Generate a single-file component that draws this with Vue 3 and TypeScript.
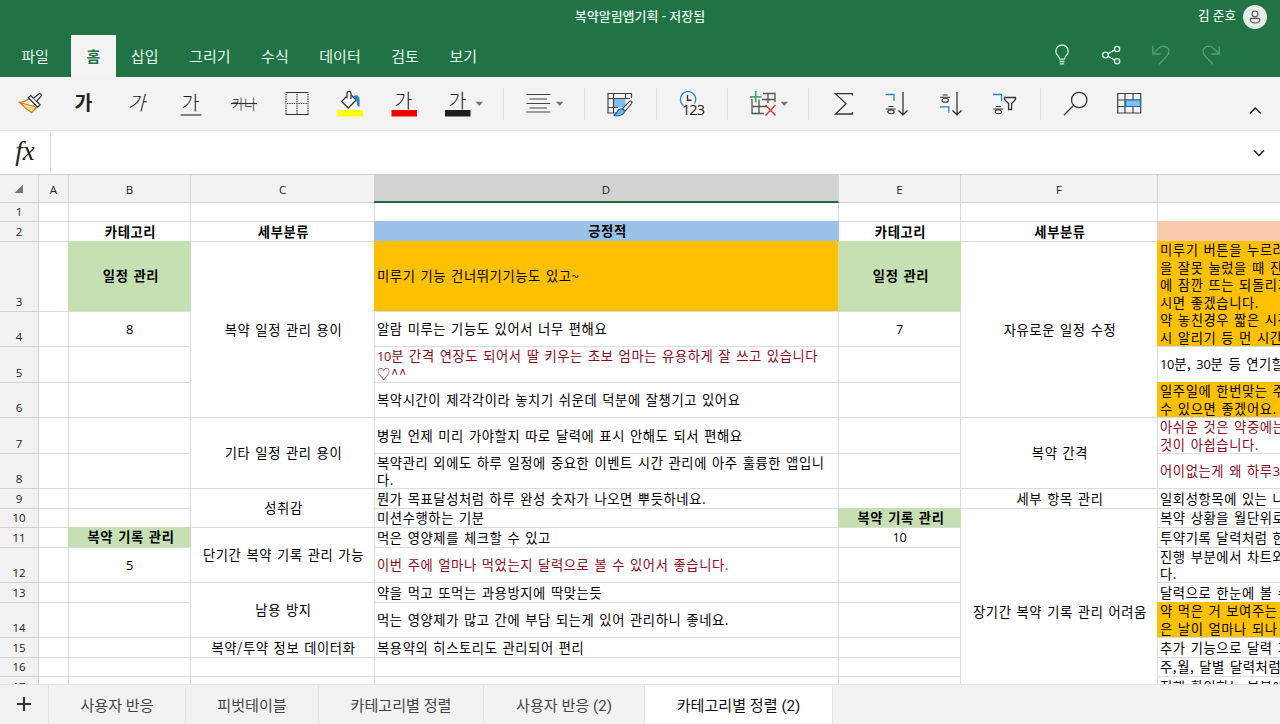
<script setup lang="ts">
interface Cell {
  col: number
  row: number
  rows?: number
  text?: string
  lines?: string[]
  kind?: string
}

const menus: string[] = ['파일', '홈', '삽입', '그리기', '수식', '데이터', '검토', '보기']
const columns: string[] = ['A', 'B', 'C', 'D', 'E', 'F', '']
const sheetTabs: string[] = ['사용자 반응', '피벗테이블', '카테고리별 정렬', '사용자 반응 (2)', '카테고리별 정렬 (2)']
const activeTab = 4
const rowCount = 17

const filled: Cell[] = [
  { col: 2, row: 2, text: '카테고리', kind: 'center bold' },
  { col: 2, row: 3, text: '일정 관리', kind: 'center bold green' },
  { col: 2, row: 4, text: '8', kind: 'center number' },
  { col: 2, row: 11, text: '복약 기록 관리', kind: 'center bold green' },
  { col: 2, row: 12, text: '5', kind: 'center number' },
  { col: 3, row: 2, text: '세부분류', kind: 'center bold' },
  { col: 3, row: 3, rows: 4, text: '복약 일정 관리 용이', kind: 'center' },
  { col: 3, row: 7, rows: 2, text: '기타 일정 관리 용이', kind: 'center' },
  { col: 3, row: 9, rows: 2, text: '성취감', kind: 'center' },
  { col: 3, row: 11, rows: 2, text: '단기간 복약 기록 관리 가능', kind: 'center' },
  { col: 3, row: 13, rows: 2, text: '남용 방지', kind: 'center' },
  { col: 3, row: 15, text: '복약/투약 정보 데이터화', kind: 'center' },
  { col: 4, row: 2, text: '긍정적', kind: 'center bold blue' },
  { col: 4, row: 3, text: '미루기 기능 건너뛰기기능도 있고~', kind: 'orange' },
  { col: 4, row: 4, text: '알람 미루는 기능도 있어서 너무 편해요' },
  { col: 4, row: 5, lines: ['10분 간격 연장도 되어서 딸 키우는 초보 엄마는 유용하게 잘 쓰고 있습니다', '♡^^'], kind: 'red' },
  { col: 4, row: 6, text: '복약시간이 제각각이라 놓치기 쉬운데 덕분에 잘챙기고 있어요' },
  { col: 4, row: 7, text: '병원 언제 미리 가야할지 따로 달력에 표시 안해도 되서 편해요' },
  { col: 4, row: 8, lines: ['복약관리 외에도 하루 일정에 중요한 이벤트 시간 관리에 아주 훌륭한 앱입니', '다.'] },
  { col: 4, row: 9, text: '뭔가 목표달성처럼 하루 완성 숫자가 나오면 뿌듯하네요.' },
  { col: 4, row: 10, text: '미션수행하는 기분' },
  { col: 4, row: 11, text: '먹은 영양제를 체크할 수 있고' },
  { col: 4, row: 12, text: '이번 주에 얼마나 먹었는지 달력으로 볼 수 있어서 좋습니다.', kind: 'red' },
  { col: 4, row: 13, text: '약을 먹고 또먹는 과용방지에 딱맞는듯' },
  { col: 4, row: 14, text: '먹는 영양제가 많고 간에 부담 되는게 있어 관리하니 좋네요.' },
  { col: 4, row: 15, text: '복용약의 히스토리도 관리되어 편리' },
  { col: 5, row: 2, text: '카테고리', kind: 'center bold' },
  { col: 5, row: 3, text: '일정 관리', kind: 'center bold green' },
  { col: 5, row: 4, text: '7', kind: 'center number' },
  { col: 5, row: 10, text: '복약 기록 관리', kind: 'center bold green' },
  { col: 5, row: 11, text: '10', kind: 'center number' },
  { col: 6, row: 2, text: '세부분류', kind: 'center bold' },
  { col: 6, row: 3, rows: 4, text: '자유로운 일정 수정', kind: 'center' },
  { col: 6, row: 7, rows: 2, text: '복약 간격', kind: 'center' },
  { col: 6, row: 9, text: '세부 항목 관리', kind: 'center' },
  { col: 6, row: 10, rows: 8, text: '장기간 복약 기록 관리 어려움', kind: 'center tall' },
  { col: 7, row: 2, kind: 'peach' },
  { col: 7, row: 3, rows: 2, lines: ['미루기 버튼을 누르려', '을 잘못 눌렀을 때 진짜', '에 잠깐 뜨는 되돌리기', '시면 좋겠습니다.', '약 놓친경우 짧은 시간', '시 알리기 등 먼 시간'], kind: 'orange' },
  { col: 7, row: 5, text: '10분, 30분 등 연기할' },
  { col: 7, row: 6, lines: ['일주일에 한번맞는 주', '수 있으면 좋겠어요.'], kind: 'orange' },
  { col: 7, row: 7, lines: ['아쉬운 것은 약중에는', '것이 아쉽습니다.'], kind: 'red' },
  { col: 7, row: 8, text: '어이없는게 왜 하루3', kind: 'red' },
  { col: 7, row: 9, text: '일회성항목에 있는 나' },
  { col: 7, row: 10, text: '복약 상황을 월단위로' },
  { col: 7, row: 11, text: '투약기록 달력처럼 한' },
  { col: 7, row: 12, lines: ['진행 부분에서 차트와', '다.'] },
  { col: 7, row: 13, text: '달력으로 한눈에 볼 수' },
  { col: 7, row: 14, lines: ['약 먹은 거 보여주는', '은 날이 얼마나 되나'], kind: 'orange' },
  { col: 7, row: 15, text: '추가 기능으로 달력 기' },
  { col: 7, row: 16, text: '주,월, 달별 달력처럼' },
  { col: 7, row: 17, text: '진행 확인하는 부분에' },
]

function withBlanks(source: Cell[]): Cell[] {
  const taken = new Set<string>()
  for (const c of source) {
    for (let r = c.row; r < c.row + (c.rows ?? 1); r++) taken.add(`${c.col}:${r}`)
  }
  const blanks: Cell[] = []
  for (let row = 1; row <= rowCount; row++) {
    for (let col = 1; col <= 7; col++) {
      if (!taken.has(`${col}:${row}`)) blanks.push({ col, row })
    }
  }
  return [...blanks, ...source]
}

const cells: Cell[] = withBlanks(filled)

function linesOf(cell: Cell): string[] {
  return cell.lines ?? (cell.text ? [cell.text] : [])
}

function area(cell: Cell): { gridArea: string } {
  return { gridArea: `${cell.row + 1} / ${cell.col + 1} / span ${cell.rows ?? 1} / span 1` }
}

function runs(line: string): { value: string; digits: boolean }[] {
  return line
    .split(/(\d+)/)
    .filter((s) => s.length > 0)
    .map((value) => ({ value, digits: /^\d+$/.test(value) }))
}
</script>

<template>
  <div class="app">
    <header class="top">
      <div class="title-row">
        <span class="title">복약알림앱기획 - 저장됨</span>
        <div class="user">
          <span class="name">김 준호</span>
          <svg class="avatar" width="24" height="24" viewBox="0 0 24 24">
            <circle cx="12" cy="12" r="12" fill="#e9ecea" />
            <g fill="none" stroke="#555" stroke-width="1.1">
              <circle cx="12" cy="8.9" r="2.9" />
              <path d="M8.3 13.4h7.4q1.1 0 1.1 1.1c0 2.4-2.2 3.5-4.8 3.5s-4.8-1.1-4.8-3.5q0-1.1 1.1-1.1z" />
            </g>
          </svg>
        </div>
      </div>
      <nav class="menu">
        <span v-for="m in menus" :key="m" class="menu-item" :class="{ active: m === '홈' }">{{ m }}</span>
        <div class="quick">
          <svg width="20" height="22" viewBox="0 0 20 22" fill="none" stroke="#c9f3dc" stroke-width="1.3">
            <path d="M7.6 15.2c0-3-3.8-4.2-3.8-8a6.2 6.2 0 0 1 12.4 0c0 3.8-3.8 5-3.8 8z M7.6 17.5h4.8 M7.8 19.8h4.4" />
          </svg>
          <svg width="20" height="22" viewBox="0 0 20 22" fill="none" stroke="#d5f5e3" stroke-width="1.4">
            <circle cx="3.4" cy="11" r="2.9" /><circle cx="15.1" cy="5" r="2.6" /><circle cx="15.1" cy="17.2" r="2.6" />
            <path d="M6 9.700l6.700-3.500 M6 12.300l6.700 3.700" />
          </svg>
          <svg width="20" height="22" viewBox="0 0 20 22" fill="none" stroke="#58a078" stroke-width="1.3">
            <path d="M1.800 2.200v7.800h8 M2.200 9.600l6.300-6.200c3.200-2.800 9.500-.8 9.500 4.100 0 1.700-.7 2.900-1.900 4.100L8.200 20.300" />
          </svg>
          <svg width="20" height="22" viewBox="0 0 20 22" fill="none" stroke="#58a078" stroke-width="1.3">
            <path d="M18.200 2.200v7.800h-8 M17.800 9.600l-6.300-6.200C8.300.6 2 2.600 2 7.500c0 1.700.7 2.900 1.900 4.100l7.900 8.700" />
          </svg>
        </div>
      </nav>
    </header>

    <div class="tools">
      <!-- format painter -->
      <svg class="tool" viewBox="-28 77 56 54">
        <path d="M-10.500 102.300c3.500 0 7-1.300 9.800-3.800l8.200 8.300-6 5.700z" fill="#fff" stroke="#c9782a" stroke-width="1.2" />
        <path d="M-10 102.500l16.500 4.500-5 5.500q-6-3.500-11.500-10z" fill="#fbd98a" stroke="#c9782a" stroke-width="1.1" />
        <path d="M-1.800 97.800l2.600-2.300 9.300 9.300-2.300 2.300z" fill="#f7f7f7" stroke="#333" stroke-width="1.2" />
        <path d="M3.600 98.300l5-4.200q1.400-.9 2.300 0t0 2.300l-4.400 4.800" fill="#f7f7f7" stroke="#333" stroke-width="1.2" />
      </svg>
      <svg class="tool" viewBox="-28 77 56 54"><text class="ga bold" x="-.5" y="110">가</text></svg>
      <svg class="tool" viewBox="-28 77 56 54"><text class="ga" transform="translate(-.5 110) skewX(-14)" x="0" y="0">가</text></svg>
      <svg class="tool" viewBox="-28 77 56 54">
        <text class="ga" x="-.5" y="110">가</text>
        <path d="M-10.500 115h21" stroke="#444" stroke-width="1.300" />
      </svg>
      <svg class="tool" viewBox="-28 77 56 54">
        <text class="kana" x="0" y="109">카나</text>
        <path d="M-13 103.500h26" stroke="#333" stroke-width="1.200" />
      </svg>
      <svg class="tool" viewBox="-28 77 56 54" fill="none" stroke="#333">
        <path d="M-11.500 92.500h23 M-11.500 114.500h23" stroke-width="1.200" />
        <path d="M-11 94v20 M0 94v20 M11 94v20 M-10 103.500h21" stroke-width="1.200" stroke-dasharray="1.300 1" />
      </svg>
      <svg class="tool" viewBox="-28 77 56 54">
        <path d="M-12.500 110h25.500v6.500h-25.500z" fill="#ffff00" />
        <path d="M-3.300 96.200l-5 5.200 6.500 6.600 8-8-4.800-4.700" fill="#fff" stroke="#333" stroke-width="1.300" />
        <path d="M-3 98.500v-5q0-2.200 2-2.200t2 2.200v5.500" fill="none" stroke="#333" stroke-width="1.200" />
        <path d="M3.800 96.300c3.200-1.600 5.500-.3 5.400 3.700v6.500q-2.200-.5-2.200-5.500z" fill="#2e84c4" stroke="#1e6ba8" stroke-width=".6" />
      </svg>
      <svg class="tool" viewBox="-28 77 56 54">
        <text class="ga" x="-.5" y="107.500">가</text>
        <path d="M-12.500 110h25.500v6.500h-25.500z" fill="#f00000" />
      </svg>
      <svg class="tool" viewBox="-28 77 56 54">
        <text class="ga" x="-.5" y="107.500">가</text>
        <path d="M-13 110h25.500v6.500h-25.500z" fill="#1f1f1f" />
        <path d="M17.500 101.800h7.500l-3.750 4.300z" fill="#777" />
      </svg>
      <i class="sep"></i>
      <svg class="tool" viewBox="-28 77 56 54">
        <path d="M-11.700 94.500h24 M-8.500 99h17.500 M-11.700 103.500h24 M-8.500 108h17.500 M-11.700 112h24" stroke="#444" stroke-width="1.200" />
        <path d="M18 101.800h7.500l-3.750 4.300z" fill="#777" />
      </svg>
      <i class="sep"></i>
      <!-- cell styles -->
      <svg class="tool" viewBox="-28 77 56 54">
        <path d="M-6.500 98.500h12v9h-12z" fill="#7fbdf0" />
        <path d="M-2 113h-10V93.500h23.500V98 M-12 98.500h22 M-12 107.500h10 M-6.500 94v19 M5.500 94v5" fill="none" stroke="#444" stroke-width="1.200" />
        <path d="M11.700 101.300c.8.700.3 1.600-.5 2.700l-6 7-2.700-2.400 6.300-6.400c1.100-1.100 2.200-1.500 2.900-.9z" fill="#fff" stroke="#333" stroke-width="1.100" />
        <path d="M2 109c2 .5 3 2.200 2 4-1.500 2.800-6.500 3.300-10.500 2.300 2.700-.5 2.800-1.800 3.900-4 .9-1.700 2.800-2.700 4.600-2.300z" fill="#6db7ee" stroke="#155d96" stroke-width="1.100" />
      </svg>
      <i class="sep"></i>
      <!-- number format -->
      <svg class="tool" viewBox="-28 77 56 54">
        <path d="M-8.500 105.500a7.700 7.700 0 1 1 11-2" fill="none" stroke="#2b86bd" stroke-width="1.300" />
        <path d="M-4.500 95v5.200h4" fill="none" stroke="#333" stroke-width="1.400" />
        <text class="num" x="1" y="115.300">123</text>
      </svg>
      <i class="sep"></i>
      <!-- insert and delete cells -->
      <svg class="tool" viewBox="-28 77 56 54" fill="none">
        <path d="M-1 93.500h12V102 M-12 99v14.500H0 M-2 99.500h12.500 M-12 106.500h15 M-5 99.500v14 M4 94v9" stroke="#555" stroke-width="1.300" />
        <path d="M-8.300 91v11.500 M-14 96.800h11.500" stroke="#4ea66b" stroke-width="1.700" />
        <path d="M1.500 105l10 10.500 M11.500 105l-10 10.500" stroke="#c23b3b" stroke-width="1.400" />
        <path d="M16.500 101.800h7.500l-3.750 4.300z" fill="#777" />
      </svg>
      <i class="sep"></i>
      <svg class="tool" viewBox="-28 77 56 54" fill="none" stroke="#333" stroke-width="1.300">
        <path d="M8.500 95.500v-1.900h-17L2.100 103.700-8.500 114h17v-1.900" />
      </svg>
      <svg class="tool" viewBox="-28 77 56 54" fill="none" stroke="#333" stroke-width="1.300">
        <path d="M-10.500 94.500h8.500v6.500" stroke="#2b86bd" />
        <path d="M7 92v22.500 M2.500 110.500l4.500 4.300 4.500-4.300" />
        <path d="M-7.500 106.500h5 M-10.300 109h10" stroke-width="1.100" /><ellipse cx="-5" cy="111.800" rx="3.200" ry="1.900" stroke-width="1.100" />
      </svg>
      <svg class="tool" viewBox="-28 77 56 54" fill="none" stroke="#333" stroke-width="1.300">
        <path d="M-10 106.800h8.800v6" stroke="#2b86bd" />
        <path d="M7 92v22.500 M2.500 110.500l4.500 4.300 4.500-4.300" />
        <path d="M-7.300 95h5 M-10 97.300h10" stroke-width="1.100" /><ellipse cx="-4.800" cy="100.300" rx="3.200" ry="2" stroke-width="1.100" />
      </svg>
      <svg class="tool" viewBox="-28 77 56 54" fill="none" stroke="#333" stroke-width="1.300">
        <path d="M-11 94.500h8.500v6.500" stroke="#2b86bd" />
        <path d="M-8 106.500h5 M-10.800 109h10" stroke-width="1.100" /><ellipse cx="-5.700" cy="111.800" rx="3.200" ry="1.900" stroke-width="1.100" />
        <path d="M.500 97.500h11v2L7.600 103.500v6h-3v-6L.500 99.500z" />
      </svg>
      <i class="sep"></i>
      <svg class="tool" viewBox="-28 77 56 54" fill="none" stroke="#333" stroke-width="1.300">
        <circle cx="4.200" cy="100" r="7.700" /><path d="M-1.500 105.500l-9.500 9.500" />
      </svg>
      <svg class="tool" viewBox="-28 77 56 54" fill="none">
        <path d="M-11.300 93.500h23v19.500h-23z M-11.300 100h23 M-11.300 106.500h23 M-4 93.500v19.500 M4 93.500v19.500" stroke="#444" stroke-width="1.200" />
        <path d="M-3.500 100h15v6.500h-15z" fill="#7cc0f4" stroke="#1b6fae" stroke-width="1.200" />
      </svg>
      <svg class="tool" viewBox="-28 77 56 54" fill="none" stroke="#222" stroke-width="1.500">
        <path d="M-5.200 113.500l5.500-5.500 5.500 5.500" />
      </svg>
    </div>

    <div class="formula">
      <span class="fx">fx</span>
      <span class="entry"></span>
      <svg width="14" height="10" viewBox="0 0 14 10" fill="none" stroke="#222" stroke-width="1.500"><path d="M2 2.500l5 5 5-5" /></svg>
    </div>

    <main class="viewport">
      <div class="grid">
        <div class="corner"><svg width="10" height="10" viewBox="0 0 10 10"><path d="M9 .500v8.500H.500z" fill="#777" /></svg></div>
        <div v-for="(c, i) in columns" :key="'c' + i" class="col-head" :class="{ selected: c === 'D' }">{{ c }}</div>
        <div v-for="r in rowCount" :key="'r' + r" class="row-head" :style="{ gridArea: `${r + 1} / 1` }">{{ r }}</div>
        <div v-for="cell in cells" :key="cell.col + '-' + cell.row" class="cell" :class="cell.kind" :style="area(cell)">
          <div v-for="(line, li) in linesOf(cell)" :key="li" class="line"><span
            v-for="(run, ri) in runs(line)" :key="ri" :class="{ digits: run.digits }">{{ run.value }}</span></div>
        </div>
      </div>
    </main>

    <footer class="tabs">
      <span class="add"><svg width="14" height="14" viewBox="0 0 14 14" stroke="#333" stroke-width="2.200"><path d="M7 0v14M0 7h14" /></svg></span>
      <span v-for="(t, i) in sheetTabs" :key="t" class="tab" :class="['t' + i, { active: i === activeTab }]">{{ t }}</span>
    </footer>
  </div>
</template>

<style>
body {
  margin: 0;
}
</style>

<style scoped>
.app {
  width: 1280px;
  height: 724px;
  display: flex;
  flex-direction: column;
  overflow: hidden;
  background: #fff;
  color: #000;
  font-family: Roboto, "Noto Sans CJK KR", sans-serif;
}
.top {
  flex: none;
  height: 77px;
  background: #217346;
  color: #e2f7ea;
}
.title-row {
  display: grid;
  grid-template-columns: 1fr auto 1fr;
  align-items: center;
  height: 34px;
}
.title {
  grid-column: 2;
  font-size: 13px;
  line-height: 20px;
  font-weight: 500;
}
.user {
  justify-self: end;
  display: flex;
  align-items: center;
  gap: 7px;
  margin-right: 13px;
  font-size: 12.600px;
  font-weight: 500;
}
.name {
  line-height: 20px;
  padding-bottom: 2px;
}
.avatar {
  display: block;
}
.menu {
  display: flex;
  align-items: stretch;
  height: 43px;
  padding-left: 6px;
}
.menu-item {
  display: flex;
  align-items: center;
  padding: 0 15.300px 1px;
  font-size: 15px;
}
.menu-item.active {
  margin: 1px 0 0 7px;
  padding-bottom: 2px;
  background: #f4f4f4;
  color: #217346;
  font-weight: 700;
}
.quick {
  display: flex;
  gap: 29.700px;
  align-items: center;
  margin-left: auto;
  margin-right: 59px;
  padding-bottom: 1px;
}
.tools {
  flex: none;
  height: 54px;
  box-sizing: border-box;
  border-bottom: 1px solid #e6e6e6;
  padding-left: 2px;
  background: #f3f3f3;
  display: grid;
  align-items: start;
  grid-template-columns: 53.500px 53.500px 53.500px 53.500px 52.700px 53.800px 53.500px 54px 73px 7.500px 73.500px 8.500px 63.500px 8px 63px 9px 72px 8px 52.500px 53.500px 54px 64px 7px 54px 126.500px 52px;
}
.tool {
  width: 56px;
  height: 54px;
  overflow: visible;
}
.sep {
  width: 1px;
  height: 32px;
  margin-top: 11px;
  background: #e2e2e2;
}
.tool text {
  font-family: "Noto Sans CJK KR", sans-serif;
  text-anchor: middle;
  fill: #222;
}
.tool .ga {
  font-size: 19.500px;
  font-weight: 300;
}
.tool .bold {
  font-weight: 700;
}
.tool .kana {
  font-size: 13.500px;
  font-weight: 300;
}
.tool .num {
  font-family: "Open Sans", sans-serif;
  font-size: 14.500px;
  letter-spacing: -.900px;
}
.formula {
  flex: none;
  height: 44px;
  box-sizing: border-box;
  border-bottom: 1px solid #d0d0d0;
  display: flex;
  align-items: center;
  padding-right: 14px;
}
.fx {
  width: 51px;
  height: 43px;
  box-sizing: border-box;
  border-right: 1px solid #dedede;
  font: italic 27px/41px "Liberation Serif", serif;
  text-align: center;
  color: #222;
}
.entry {
  flex: 1;
}
.viewport {
  flex: 1;
  min-height: 0;
  overflow: hidden;
}
.grid {
  display: grid;
  grid-template-columns: 39px 30px 122px 184px 464px 122px 197px 130px;
  grid-template-rows: 28px 19px 20px 70px 35px 36px 35px 36px 35px 20px 19px 20px 35px 20px 35px 20px 19px 20px;
}
.corner,
.col-head,
.row-head {
  box-sizing: border-box;
  background: #f2f2f2;
  border-right: 1px solid #d2d2d2;
  border-bottom: 1px solid #d2d2d2;
  color: #222;
  font-family: "Open Sans", sans-serif;
  font-size: 11.500px;
  text-align: center;
}
.corner {
  padding: 9px 14px;
}
.corner svg {
  display: block;
}
.col-head {
  line-height: 29px;
}
.col-head.selected {
  margin-left: -1px;
  background: #d2d2d2;
  border-bottom: 2px solid #1d6b40;
}
.row-head {
  display: flex;
  align-items: flex-end;
  justify-content: center;
  line-height: 18px;
}
.cell {
  box-sizing: border-box;
  min-width: 0;
  min-height: 0;
  border-right: 1px solid #dcdcdc;
  border-bottom: 1px solid #dcdcdc;
  padding-left: 2px;
  background: #fff;
  display: flex;
  flex-direction: column;
  justify-content: center;
  font-family: "Noto Sans CJK KR", sans-serif;
  font-size: 13.300px;
  line-height: 17.500px;
  letter-spacing: .600px;
  word-spacing: 1.400px;
}
.line {
  white-space: nowrap;
}
.digits {
  font-family: "Open Sans", sans-serif;
  font-size: 12.800px;
  letter-spacing: -.200px;
}
.center {
  align-items: center;
  padding-left: 2px;
}
.number {
  padding-left: 0;
}
.tall {
  padding-top: 18px;
}
.bold {
  font-weight: 700;
}
.red {
  color: #8b0a1a;
}
.green,
.orange,
.blue,
.peach {
  margin: -1px 0 0 -1px;
  border-right: 0;
}
.orange {
  padding-left: 3px;
}
.green {
  padding-left: 3px;
  background: #c6e0b4;
}
.orange {
  background: #ffc000;
}
.blue {
  background: #9bc2e6;
}
.peach {
  background: #f8cbad;
}
.tabs {
  flex: none;
  height: 40px;
  box-sizing: border-box;
  border-top: 1px solid #e2e2e2;
  background: #f2f2f2;
  display: flex;
}
.add {
  width: 49px;
  box-sizing: border-box;
  border-right: 1px solid #e4e4e4;
  padding-bottom: 1px;
  display: flex;
  align-items: center;
  justify-content: center;
}
.tab {
  box-sizing: border-box;
  border-right: 1px solid #e4e4e4;
  padding-bottom: 2px;
  display: flex;
  align-items: center;
  justify-content: center;
  font-size: 15.100px;
  color: #444;
}
.t0 {
  width: 137px;
}
.t1 {
  width: 133px;
}
.t2 {
  width: 165px;
}
.t3 {
  width: 161px;
}
.t4 {
  width: 188px;
}
.tab.active {
  background: #fff;
  color: #111;
}
</style>
